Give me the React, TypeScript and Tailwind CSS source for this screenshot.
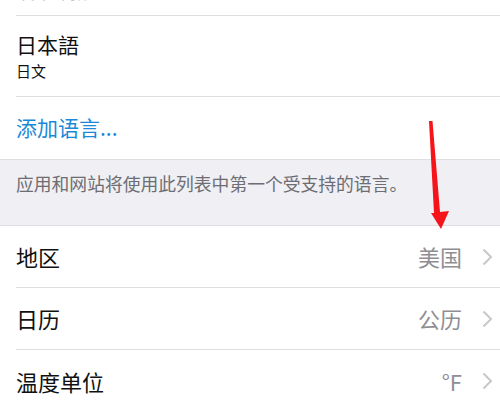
const font = { fontFamily: '"Noto Sans CJK SC", "Noto Sans", sans-serif' };

function Chevron() {
  return (
    <svg width="11" height="18" viewBox="0 0 11 18" className="shrink-0">
      <path d="M1.5 1.5 L9 9 L1.5 16.5" fill="none" stroke="#c7c7cc" strokeWidth="2" />
    </svg>
  );
}

function Row({ label, value, last }: { label: string; value: string; last?: boolean }) {
  return (
    <div className="flex h-[62px] items-center pl-4">
      <div className={`flex h-full flex-1 items-center pr-[7px] ${last ? "" : "border-b border-[#dedee2]"}`}>
        <span className="flex-1 text-[22px] text-[#111]">{label}</span>
        <span className="mr-5 text-[22px] text-[#8e8e93]">{value}</span>
        <Chevron />
      </div>
    </div>
  );
}

export default function App() {
  return (
    <div className="relative h-[400px] w-[500px] overflow-hidden bg-white" style={font}>
      <div className="h-[16px] overflow-hidden pl-4">
        <div className="-mt-[17px] border-b border-[#dedee2] pb-[13px] text-[15px] leading-[19px] text-[#c4c4c4]">
          中文（简体）
        </div>
      </div>

      <div className="pl-4">
        <div className="flex h-[81px] flex-col justify-center gap-[3px] border-b border-[#dedee2]">
          <div className="text-[21px] leading-[26px] text-[#111]">日本語</div>
          <div className="text-[15px] leading-[22px] text-[#111]">日文</div>
        </div>
      </div>

      <div className="flex h-[62px] items-center pl-4">
        <span className="text-[21px] text-[#1a8ad8]">添加语言...</span>
      </div>

      <div className="h-[67px] border-y border-[#dedee2] bg-[#efeff4] pl-4 pt-[11px]">
        <span className="text-[17.8px] leading-[24px] text-[#6d6d72]">应用和网站将使用此列表中第一个受支持的语言。</span>
      </div>

      <Row label="地区" value="美国" />
      <Row label="日历" value="公历" />
      <Row label="温度单位" value="°F" last />

      <svg className="absolute left-0 top-0" width="500" height="400" viewBox="0 0 500 400">
        <polygon points="429,121 432.5,121 440,212 449,211 441,229 431,213 434,213" fill="#f5141a" />
      </svg>
    </div>
  );
}
